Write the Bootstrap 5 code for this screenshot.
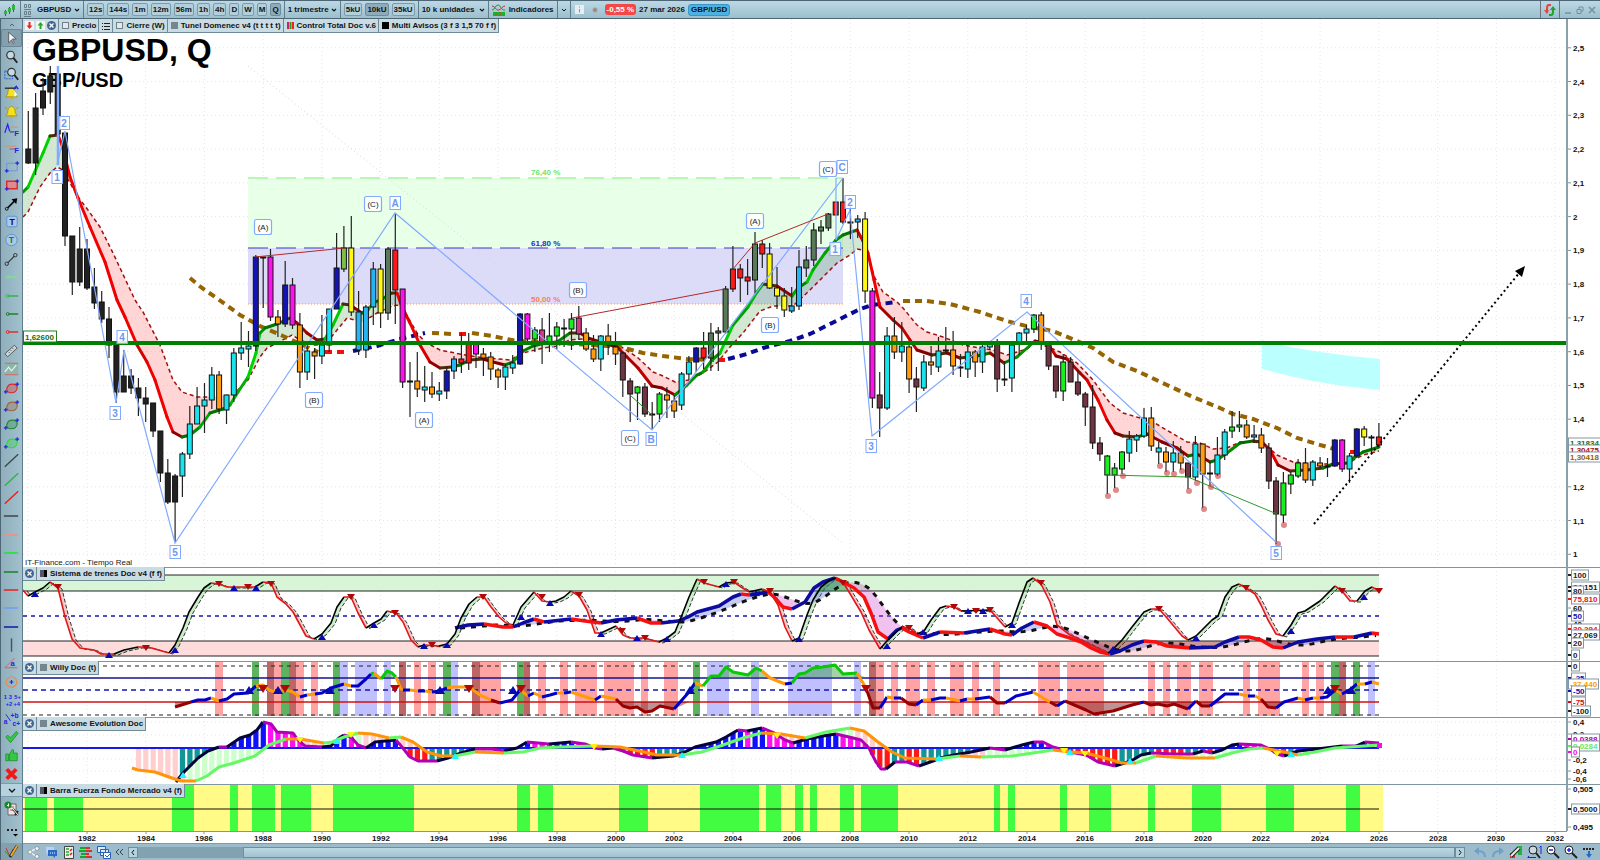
<!DOCTYPE html>
<html lang="es">
<head>
<meta charset="utf-8">
<meta name="viewport" content="width=device-width, initial-scale=1">
<title>GBPUSD, Q</title>
<link href="https://cdn.jsdelivr.net/npm/bootstrap@5.3.0/dist/css/bootstrap.min.css" rel="stylesheet">
<script src="https://cdn.jsdelivr.net/npm/bootstrap@5.3.0/dist/js/bootstrap.bundle.min.js"></script>
<style>
  body { font: bold 8px/10px "Liberation Sans", Arial, sans-serif; color: #101418; background: #fff; }
  button, select, input { font: inherit; color: inherit; }
  button { border: 0; background: none; padding: 0; line-height: 1; }
  svg { display: block; }
  .topbar { height: 19px; background: linear-gradient(#bcd8e5, #9cbfcc); border-top: 1px solid #4d6675; border-bottom: 1px solid #4d6675; }
  .topbar .cell { border-right: 1px solid #5f7c8b; height: 17px; display: flex; align-items: center; gap: 3px; padding: 0 3px; }
  .pick { appearance: none; border: 0; padding: 0; height: 14px; background: url("data:image/svg+xml,%3Csvg xmlns='http://www.w3.org/2000/svg' width='6' height='6'%3E%3Cpath d='M1 2l2 2 2-2' fill='none' stroke='%23101418' stroke-width='1.2'/%3E%3C/svg%3E") no-repeat right center; }
  .pick-pair { width: 43px; } .pick-unit { width: 49px; } .pick-size { width: 63px; }
  .tf { height: 13px; padding: 0 1px; border: 1px solid #7c9baa; border-radius: 2px; background: #b2cfdb; }
  .tf.on { background: #8fabb9; border-color: #6f8c9b; }
  .quote { gap: 3px; }
  .tagbox { border-radius: 3px; padding: 1px 2px; line-height: 9px; }
  .drop { background: #f24848; color: #fff; }
  .pairpill { background: #4db1e2; border: 1px solid #3795c8; line-height: 8px; }
  .side { width: 23px; background: linear-gradient(90deg, #8fafbd, #a2c0cd); border-left: 1px solid #4d6675; border-right: 1px solid #5f7c8b; }
  .side button { width: 100%; display: flex; align-items: center; justify-content: center; }
  .side .tools button { flex: 1 1 0; min-height: 0; }
  .side .on { background: #84a0ae; box-shadow: inset 0 0 0 1px #6d8997; border-radius: 2px; }
  .fold { height: 10px; } .unfold { height: 14px; background: #b6d2de; border-top: 1px solid #7c9baa; border-bottom: 1px solid #7c9baa; }
  .act { height: 23px; } .act2 { height: 23px; } .act3 { height: 17px; background: #84a0ae; }
  .pane { position: relative; flex-basis: 0; min-height: 0; }
  .pane > svg { width: 100%; height: 100%; position: absolute; }
  .p-price { flex-grow: 548; } .p-tren { flex-grow: 94; } .p-willy { flex-grow: 56; } .p-awe { flex-grow: 67; } .p-fuerza { flex-grow: 47; }
  .years { height: 12px; position: relative; } .years > svg { width: 100%; height: 100%; }
  .tabs { position: absolute; left: 0; top: 0; height: 14px; display: flex; background: #c9dbe3; border-bottom: 1px solid #6f8a98; }
  .tabs > * { border-right: 1px solid #6f8a98; display: flex; align-items: center; gap: 3px; padding: 0 2px 0 3px; white-space: nowrap; }
  .tabs .shut { padding: 0 2px; }
  .tabs .trio { gap: 2px; padding: 0 2px; }
  .sq { width: 7px; height: 7px; }
  .tabs input { appearance: none; width: 7px; height: 7px; border: 1px solid #71818a; background: #dfe9ee; margin: 0; }
  .foot { height: 17px; background: #9dbccb; border-top: 1px solid #7c9baa; }
  .foot .tray { gap: 4px; padding: 0 4px; }
  .track { background: #83a2b1; height: 11px; }
  .knob { background: linear-gradient(#bcd8e3, #a2c2cf); width: 92%; height: 11px; border: 1px solid #6f8f9f; }
  .arrowbtn { width: 10px; height: 11px; border: 1px solid #6f8f9f; background: #b6d2de; }
  text { font-family: "Liberation Sans", Arial, sans-serif; }
</style>
</head>
<body class="vh-100 d-flex flex-column overflow-hidden">
<header class="topbar d-flex align-items-center flex-shrink-0">
  <div class="cell">
    <svg width="14" height="14" viewBox="0 0 14 14"><path d="M2.500 7v6M6.500 4v7M10.500 1v8" stroke="#246b2c"/><path d="M1 8h3v3H1zM5 5h3v4H5zM9 2h3v5H9z" fill="#35b045"/></svg>
  </div>
  <div class="cell border-end-0">
    <svg width="7" height="14" viewBox="0 0 7 14" fill="none" stroke="#697f8b"><path d="M.5 1.500h2v3h-2zM4.500 1.500h2v3h-2zM.5 8.500h2v3h-2zM4.500 8.500h2v3h-2zM0 6.500h7M0 13.500h7"/></svg>
  </div>
  <div class="cell"><select class="pick pick-pair" aria-label="Valor"><option>GBPUSD</option></select></div>
  <div class="cell">
    <button class="tf">12s</button><button class="tf">144s</button><button class="tf">1m</button><button class="tf">12m</button><button class="tf">56m</button><button class="tf">1h</button><button class="tf">4h</button><button class="tf">D</button><button class="tf">W</button><button class="tf">M</button><button class="tf on">Q</button>
  </div>
  <div class="cell"><select class="pick pick-unit" aria-label="Periodo"><option>1 trimestre</option></select></div>
  <div class="cell"><button class="tf">5kU</button><button class="tf on">10kU</button><button class="tf">35kU</button></div>
  <div class="cell"><select class="pick pick-size" aria-label="Unidades"><option>10 k unidades</option></select></div>
  <div class="cell">
    <svg width="14" height="14" viewBox="0 0 14 14"><path d="M1 9v4h12v-4z" fill="#18b428"/><path d="M4 10v3M8 9v4" stroke="#e33"/><path d="M0 7c3 0 3-5 6-5s3 6 7 5" fill="none" stroke="#2a8f34"/><path d="M0 3c3 0 4 5 7 4s3-4 6-4" fill="none" stroke="#c33"/></svg>
    <button>Indicadores</button>
  </div>
  <div class="cell"><button aria-label="Más indicadores"><svg width="6" height="6"><path d="M1 2l2 2 2-2" fill="none" stroke="#101418"/></svg></button></div>
  <div class="quote d-flex align-items-center ps-1">
    <svg width="9" height="9" viewBox="0 0 9 9"><path d="M0 0h9v9H0z" fill="#e6eef2"/><path d="M4.500 1.500v1M4.500 4v3.500" stroke="#8796a0"/></svg>
    <svg width="15" height="8" viewBox="0 0 15 8"><circle cx="8" cy="4" r="2.500" fill="#8d8d8d" stroke="#b9b9b9"/></svg>
    <span class="tagbox drop">-0,55 %</span><span>27 mar 2026</span><span class="tagbox pairpill">GBP/USD</span>
  </div>
  <div class="ms-auto cell border-start border-secondary">
    <svg width="12" height="12" viewBox="0 0 12 12" fill="none" stroke-width="2"><path d="M7 1H5Q3 1 3 4v5" stroke="#e34545"/><path d="M0 6l3 4 2-4z" fill="#e34545"/><path d="M5 11h2q2 0 2-3V4" stroke="#1fa52b"/><path d="M12 6L9 2 6 6z" fill="#1fa52b"/></svg>
  </div>
  <div class="d-flex align-items-center gap-1 px-1">
    <button aria-label="Minimizar"><svg width="8" height="8"><path d="M1 7h6" stroke="#7590a0" stroke-width="1.500"/></svg></button>
    <button aria-label="Restaurar"><svg width="8" height="8" fill="none" stroke="#7590a0"><path d="M1 3.500h4v4H1zM3 3V1h4v4H5"/></svg></button>
    <button aria-label="Cerrar"><svg width="8" height="8"><path d="M1 1l6 6M7 1L1 7" stroke="#7590a0" stroke-width="1.500"/></svg></button>
  </div>
</header>

<div class="d-flex flex-grow-1" style="min-height:0">
  <nav class="side d-flex flex-column flex-shrink-0" aria-label="Herramientas">
    <button class="fold" aria-label="Plegar"><svg width="6" height="5"><path d="M1 4l2-2 2 2" fill="none" stroke="#4d6675"/></svg></button>
    <div class="tools d-flex flex-column flex-grow-1" id="tools"></div>
    <button class="unfold" aria-label="Más herramientas"><svg width="8" height="6"><path d="M1 2l3 3 3-3" fill="none" stroke="#101418" stroke-width="1.300"/></svg></button>
    <button class="act" aria-label="Objetos"><svg width="16" height="16" viewBox="0 0 16 16"><path d="M4 3h8v11H4z" fill="#e8e8e8" stroke="#666"/><path d="M6 6h4M6 9h4" stroke="#c44"/><circle cx="4" cy="4" r="3.500" fill="#168a26"/><path d="M3 4.500h2M4.500 2.500v3" stroke="#fff"/><path d="M9 8l5 6M14 10l-3 4" stroke="#222" stroke-width="2"/><path d="M9 8l5 6" stroke="#fff"/></svg></button>
    <button class="act2" aria-label="Opciones"><svg width="14" height="10"><path d="M2 3h2M6 3h2M10 3h2" stroke="#222" stroke-width="2"/><path d="M8 7h5l-2.500 2.500z"/></svg></button>
    <button class="act3" aria-label="Dibujo"><svg width="16" height="14" viewBox="0 0 16 14" fill="none"><path d="M2 3l4 9 3-8" stroke="#c33"/><path d="M1 6l5 6 3-6" stroke="#2a2"/><path d="M13 1L6 12" stroke="#222" stroke-width="3"/><path d="M13 1L7 11" stroke="#f4a720" stroke-width="2"/></svg></button>
  </nav>

  <main class="d-flex flex-column flex-grow-1" style="min-width:0">
    <section class="pane p-price">
      <svg id="price" role="img" aria-label="Gráfico GBPUSD trimestral"></svg>
      <div class="tabs">
        <span class="trio">
          <svg width="9" height="9"><path d="M0 0h9v9H0z" fill="#f4f4f4"/><path d="M4.500 1v4" stroke="#e22" stroke-width="2"/><path d="M1.500 4.500h6l-3 3.500z" fill="#e22"/></svg>
          <svg width="9" height="9"><path d="M0 0h9v9H0z" fill="#f4f4f4"/><path d="M4.500 8V4" stroke="#2a2" stroke-width="2"/><path d="M1.500 4.500h6l-3-3.500z" fill="#2a2"/></svg>
          <svg width="9" height="9"><circle cx="4.500" cy="4.500" r="4.500" fill="#3f6593"/><path d="M2.500 2.500l4 4M6.500 2.500l-4 4" stroke="#fff" stroke-width="1.300"/></svg>
        </span>
        <label><input type="checkbox">Precio</label>
        <button aria-label="Lista"><svg width="8" height="8"><path d="M0 1.500h1M0 4.500h1M0 7.500h1M2 1.500h6M2 4.500h6M2 7.500h6" stroke="#222"/></svg></button>
        <label><input type="checkbox">Cierre (W)</label>
        <span><svg class="sq"><path d="M0 0h7v7H0z" fill="#748791"/></svg>Tunel Domenec v4 (t t t t t)</span>
        <span><svg class="sq"><path d="M1 0v7" stroke="#d0206a" stroke-width="2"/><path d="M3.500 0v7" stroke="#22a022" stroke-width="2"/><path d="M6 0v7" stroke="#e22" stroke-width="2"/></svg>Control Total Doc v.6</span>
        <span><svg class="sq"><path d="M0 0h7v7H0z"/></svg>Multi Avisos (3 f 3 1,5 70 f f)</span>
      </div>
    </section>
    <section class="pane p-tren"><svg id="tren" role="img" aria-label="Sistema de trenes"></svg>
      <div class="tabs"><button class="shut" aria-label="Cerrar panel"></button><span><svg class="sq"><path d="M0 0h4v7H0z" fill="#556"/><path d="M4 0h3v7H4z"/></svg>Sistema de trenes Doc v4 (f f)</span></div></section>
    <section class="pane p-willy"><svg id="willy" role="img" aria-label="Willy Doc"></svg>
      <div class="tabs"><button class="shut" aria-label="Cerrar panel"></button><span><svg class="sq"><path d="M0 0h7v7H0z" fill="#748791"/></svg>Willy Doc (t)</span></div></section>
    <section class="pane p-awe"><svg id="awe" role="img" aria-label="Awesome Evolution"></svg>
      <div class="tabs"><button class="shut" aria-label="Cerrar panel"></button><span><svg class="sq"><path d="M0 0h7v7H0z" fill="#748791"/></svg>Awesome Evolution Doc</span></div></section>
    <section class="pane p-fuerza"><svg id="fuerza" role="img" aria-label="Barra Fuerza"></svg>
      <div class="tabs"><button class="shut" aria-label="Cerrar panel"></button><span><svg class="sq"><path d="M0 0h4v7H0z" fill="#556"/><path d="M4 0h3v7H4z"/></svg>Barra Fuerza Fondo Mercado v4 (f)</span></div></section>
    <div class="years flex-shrink-0"><svg id="years"></svg></div>
    <footer class="foot d-flex align-items-center flex-shrink-0">
      <div class="tray d-flex align-items-center">
        <button aria-label="Compartir"><svg width="14" height="13" viewBox="0 0 14 13"><path d="M3 6l7-4M3 6l7 5" stroke="#eef" stroke-width="1.500"/><circle cx="3" cy="6" r="2" fill="#f4f4f4" stroke="#777" stroke-width=".6"/><circle cx="10" cy="2.500" r="2" fill="#f4f4f4" stroke="#777" stroke-width=".6"/><circle cx="10" cy="10.500" r="2" fill="#f4f4f4" stroke="#777" stroke-width=".6"/></svg></button>
        <button aria-label="Chat"><svg width="13" height="13"><path d="M1 1h8v6H4l-2 2V7H1z" fill="#b7d1f4"/><path d="M3 4h9v6h-2v2l-2-2H3z" fill="#2868c8"/><path d="M5 7h1M7 7h1M9 7h1" stroke="#fff"/></svg></button>
        <button aria-label="Informe"><svg width="13" height="13"><path d="M2.500.5h9v12h-9z" fill="#eee" stroke="#444"/><path d="M4 3h3M4 6h3M4 9h3" stroke="#2a2" stroke-width="1.500"/><path d="M8 5l2-2M8 9l2-2" stroke="#c22" stroke-width="1.500"/></svg></button>
        <button aria-label="Órdenes"><svg width="14" height="13"><path d="M1 2h6M0 5h7M2 8h5M1 11h6" stroke="#18a828" stroke-width="2"/><path d="M7 2h4M7 5h6M7 8h3M7 11h6" stroke="#d83030" stroke-width="2"/></svg></button>
        <button aria-label="Ventanas"><svg width="14" height="13" stroke="#2563b8"><path d="M.5.5h8v6h-8zM3.500 3.500h8v6h-8z" fill="#dce9f8"/><path d="M6.500 6.500h7v6h-7z" fill="#fff"/><path d="M8 9l2 2 3-3" fill="none"/></svg></button>
        <button aria-label="Ocultar"><svg width="9" height="8" fill="none" stroke="#33454f"><path d="M4 1L1 4l3 3M8 1L5 4l3 3"/></svg></button>
      </div>
      <button class="arrowbtn" aria-label="Anterior"><svg width="8" height="8"><path d="M5 2L3 4.500 5 7" fill="none" stroke="#111"/></svg></button>
      <div class="track flex-grow-1 d-flex justify-content-end"><div class="knob"></div></div>
      <button class="arrowbtn" aria-label="Siguiente"><svg width="8" height="8"><path d="M3 2l2 2.500L3 7" fill="none" stroke="#111"/></svg></button>
      <div class="tray d-flex align-items-center ms-1">
        <button aria-label="Deshacer"><svg width="14" height="13"><path d="M12 11c0-5-3-6-7-6" fill="none" stroke="#6f9fc9" stroke-width="2"/><path d="M1 5l5-4v8z" fill="#6f9fc9"/></svg></button>
        <button aria-label="Rehacer"><svg width="14" height="13"><path d="M2 11c0-5 3-6 7-6" fill="none" stroke="#6f9fc9" stroke-width="2"/><path d="M13 5L8 1v8z" fill="#6f9fc9"/></svg></button>
        <button aria-label="Ajustes"><svg width="14" height="14"><path d="M9 1h4v9H9z" fill="#27b33a"/><path d="M1 8h5v5H1z" fill="#d33"/><path d="M2 11l8-8" stroke="#222" stroke-width="4"/><path d="M2 11l8-8" stroke="#eee" stroke-width="2"/></svg></button>
        <button aria-label="Ajustar zoom"><svg width="15" height="14" fill="none"><circle cx="6" cy="5" r="4" fill="#cdd8de" stroke="#222"/><path d="M9 8l4 5" stroke="#222" stroke-width="2"/><path d="M14 1v8M12.500 2.500L14 1M1 12.500h8M2 11l-1.500 1.500" stroke="#22d"/></svg></button>
        <button aria-label="Alejar"><svg width="14" height="14" fill="none"><circle cx="5" cy="5" r="4" fill="#fff" stroke="#222"/><path d="M8 8l5 5" stroke="#222" stroke-width="2"/><path d="M3 5h4" stroke="#22d" stroke-width="1.500"/></svg></button>
        <button aria-label="Acercar"><svg width="14" height="14" fill="none"><circle cx="5" cy="5" r="4" fill="#fff" stroke="#222"/><path d="M8 8l5 5" stroke="#222" stroke-width="2"/><path d="M3 5h4M5 3v4" stroke="#22d" stroke-width="1.500"/></svg></button>
        <button aria-label="Ir al final"><svg width="14" height="13"><path d="M1 3h2M4 3h2M7 3h2M10 3h2" stroke="#222" stroke-width="2"/><path d="M7 5v3" stroke="#2468c8" stroke-width="2"/><path d="M4 8h6l-3 4z" fill="#2468c8"/></svg></button>
      </div>
    </footer>
  </main>
</div>

<script>
/* ---------- side toolbar ---------- */
const L = (c, d, w = 1.5) => `<path d="${d}" stroke="${c}" stroke-width="${w}" fill="none"/>`;
const plus = (x, y) => L('#2424e0', `M${x - 2} ${y}h4M${x} ${y - 2}v4`, 1.2);
const T = (x, y, s, c, z = 8) => `<text x="${x}" y="${y}" font-size="${z}" font-weight="bold" fill="${c}">${s}</text>`;
const hline = c => L(c, 'M3 9h15');
const slash = c => L(c, 'M4 15L18 2');
const nodeLine = c => L(c, 'M8 9h10') + `<circle cx="7" cy="9" r="1.500" fill="none" stroke="${c}"/>`;
const oval = c => `<path d="M6 10q1-5 6-5t5 4q-1 5-6 5t-5-4z" fill="${c}" fill-opacity=".3" stroke="${c}" stroke-width="1.200"/>` + plus(5, 13) + plus(17, 5);
const bell = '<path d="M11 3q-4 1-4 7l-2 3h12l-2-3q0-6-4-7z" fill="#f3e21c" stroke="#a08a10" stroke-width=".8"/><circle cx="11" cy="14" r="1.500" fill="#d9a90d"/>';
const glass = (x, y) => `<circle cx="${x}" cy="${y}" r="4" fill="#c6dae3" stroke="#333" stroke-width="1.200"/>` + L('#222', `M${x + 3} ${y + 3}l4 5`, 2);
const tools = [
  ['Cursor', '<path d="M8 3v11l3-3 2 4 1-1-2-4h4z" fill="#eef4f7" stroke="#444" stroke-width=".8"/>'],
  ['Lupa', glass(10, 7)],
  ['Zoom', '<path d="M4 5h8v8H4z" fill="none" stroke="#2563d8" stroke-dasharray="2 1"/>' + glass(11, 6)],
  ['Alerta', bell + L('#333', 'M4 4l12 0') + L('#2424e0', 'M13 5l3-3 2 3') + '<path d="M14 6v7l3-2z" fill="#fff"/>'],
  ['Avisos', bell + L('#a08a10', 'M4 4l2 2M18 4l-2 2', 1)],
  ['Fibonacci A', L('#2424e0', 'M4 12l3-9 2 7', 1.3) + L('#e58b68', 'M9 6h9', 1) + L('#333', 'M9 11h5', 1) + T(14, 15, 'F', '#2424e0')],
  ['Fibonacci', L('#e58b68', 'M5 6h11', 1) + L('#a05050', 'M9 9h6', 1) + T(14, 13, 'F', '#2424e0')],
  ['Rectángulo azul', '<path d="M6 5h11v8H6z" fill="none" stroke="#6a96d8"/>' + plus(6, 13) + plus(17, 5)],
  ['Rectángulo rojo', '<path d="M6 5h11v8H6z" fill="#d98c92" stroke="#e02828" stroke-width="1.500"/>' + plus(6, 13) + plus(17, 5)],
  ['Flecha', L('#111', 'M7 13l7-7', 1.8) + '<path d="M11 4l6-1-1 6z"/><circle cx="6" cy="14" r="1.500" fill="none" stroke="#111"/>'],
  ['Texto', '<rect x="6" y="3" width="11" height="11" rx="2" fill="#a9c8ea" stroke="#5d8fd6"/>' + T(9, 12, 'T', '#111', 9)],
  ['Globo', '<circle cx="11" cy="9" r="6" fill="#a9c8ea" stroke="#5d8fd6"/>' + T(8, 12, 'T', '#128024', 9)],
  ['Segmento', L('#333', 'M7 13l7-7', 1.2) + '<circle cx="6" cy="14" r="1.800" fill="none" stroke="#333"/><circle cx="15" cy="5" r="1.800" fill="none" stroke="#333"/>'],
  ['Semirrecta clara', nodeLine('#7ae28c')], ['Semirrecta', nodeLine('#35b045')], ['Semirrecta oscura', nodeLine('#128024')], ['Semirrecta roja', nodeLine('#e02828')],
  ['Regla', '<path d="M4 12L14 3l3 3L7 15z" fill="#c9d6dd" stroke="#555"/>' + L('#555', 'M8 10l1 1M10 8l1 1M12 6l1 1', 1)],
  ['Canal', '<path d="M4 3h14v12H4z" fill="#8bb6a8"/>' + L('#e06060', 'M4 3h14M4 15h14', 1) + L('#e8f4f8', 'M4 12l4-5 3 4 5-6', 1.2)],
  ['Elipse roja', oval('#e02828')], ['Elipse marrón', oval('#a0643c')], ['Elipse verde', oval('#1f8a35')], ['Elipse clara', oval('#28dc3c')],
  ['Línea', slash('#3a4a52')], ['Línea verde', slash('#35b045')], ['Línea roja', slash('#ee1c1c')],
  ['Horizontal', hline('#3a3f42')], ['Horizontal salmón', hline('#ff8878')], ['Horizontal lima', hline('#10ee20')], ['Horizontal verde', hline('#108020')],
  ['Horizontal roja', hline('#f01818')], ['Horizontal celeste', hline('#6c9cf4')], ['Horizontal azul', hline('#0c10a8')],
  ['Vertical', L('#46545c', 'M11 2v14')],
  ['Ángulo', L('#d86060', 'M4 14L14 4M4 14h13', 1) + T(10, 12, 'a', '#2424e0')],
  ['Ciclo', '<circle cx="11" cy="9" r="5.500" fill="none" stroke="#e58b58" stroke-width="1.300"/>' + plus(11, 9)],
  ['Ondas', T(3, 8, '1', '#2424e0', 6) + T(8, 8, '3', '#2424e0', 6) + T(14, 8, '5+', '#2424e0', 6) + T(5, 15, '+2', '#2424e0', 6) + T(13, 15, '+4', '#2424e0', 6)],
  ['Ondas abc', T(3, 14, 'a', '#2424e0', 7) + T(10, 8, '+b', '#2424e0', 7) + T(12, 16, 'c+', '#2424e0', 7) + L('#2424e0', 'M5 4l5 7', 1)],
  ['Aceptar', '<path d="M5 9l2-2 3 3 6-7 2 2-8 10z" fill="#34c944" stroke="#1b8a2c" stroke-width=".8"/>'],
  ['Me gusta', '<path d="M5 8h3v7H5zM9 8l3-5q2 0 1 4h4v8H9z" fill="#34c944" stroke="#1b8a2c" stroke-width=".8"/>'],
  ['Borrar', L('#f01818', 'M6 4l10 10M16 4L6 14', 4)]
];
document.getElementById('tools').innerHTML = tools.map(([n, s], i) =>
  `<button aria-label="${n}"${i ? '' : ' class="on"'}><svg width="22" height="18" viewBox="0 0 22 18">${s}</svg></button>`).join('');
document.querySelectorAll('.shut').forEach(b => b.innerHTML =
  '<svg width="9" height="9"><circle cx="4.500" cy="4.500" r="4.500" fill="#3f6593"/><path d="M2.500 2.500l4 4M6.500 2.500l-4 4" stroke="#fff" stroke-width="1.300"/></svg>');

/* ---------- series, in chart units (x: 23..1567, y grows downwards) ---------- */
/* one candle per quarter from 1980: high, body top, body bottom, low, colour key */
const candles = `111,149,163,164,k 93,108,163,175,k 78,91,108,115,k 66,76,92,104,k 66,74,134,134,k 133,133,236,246,k 236,236,282,295,k 227,249,282,286,k
239,249,288,290,k 268,287,303,309,k 291,302,319,323,k 307,319,345,358,k 345,345,392,403,k 350,376,392,392,k 369,376,388,394,k 378,388,398,416,k
387,398,404,422,k 403,403,431,437,k 431,431,473,482,k 459,473,502,504,k 474,476,502,542,k 452,454,476,497,c 406,424,454,459,c 387,406,424,424,c
383,400,406,433,c 367,375,400,409,c 371,375,409,414,o 395,395,410,424,c 348,353,395,402,c 322,348,353,360,c 331,346,349,367,c 255,257,346,351,n
257,257,258,308,k 249,257,317,321,m 310,317,324,337,o 261,285,324,327,n 278,285,325,329,m 313,325,372,388,o 345,351,372,380,c 348,352,356,379,o
315,345,356,364,c 309,309,345,352,c 233,268,309,309,n 226,248,269,272,l 216,248,312,316,y 291,312,350,355,b 305,307,350,358,b 262,269,307,325,b
264,269,313,328,y 247,249,313,320,d 213,250,290,324,r 289,289,382,388,m 362,381,382,417,k 352,381,389,397,o 366,387,390,402,c 372,387,394,398,o
382,391,394,401,c 367,371,391,399,n 356,359,371,379,b 333,359,363,373,r 333,344,363,370,r 344,344,354,368,m 348,354,358,376,o 352,357,369,380,o
368,370,377,388,o 364,367,377,390,c 355,363,368,374,c 313,314,364,365,n 313,314,339,344,m 327,330,339,352,g 318,330,343,364,p 313,336,342,352,g
322,327,336,349,g 319,328,329,347,p 313,319,329,350,g 306,318,334,340,p 328,333,349,351,o 335,349,359,362,o 335,336,359,371,c 324,336,344,355,o
332,347,354,365,o 352,353,380,397,w 378,381,394,422,w 386,387,393,420,g 383,387,414,417,w 402,414,415,429,g 392,394,414,422,g 387,395,400,418,o
395,401,411,418,o 372,374,405,410,c 356,362,374,380,c 347,348,362,372,n 332,348,358,369,r 323,333,358,371,d 327,331,333,371,d 286,289,332,334,d
246,269,289,292,r 264,269,278,302,r 259,277,281,295,r 232,244,280,293,d 240,244,254,268,r 243,254,288,289,y 267,288,296,309,y 288,296,310,317,y
287,306,311,313,b 250,267,306,310,b 246,260,268,277,d 223,230,260,266,d 220,227,231,244,d 213,214,228,231,d 202,202,215,215,r 178,202,222,224,r
205,222,223,239,k 215,219,222,238,b 212,219,291,303,y 288,291,398,408,m 372,395,408,437,w 327,336,408,410,c 317,336,352,359,o 322,346,352,362,c
345,347,379,393,o 367,379,387,412,w 355,362,388,391,c 346,362,365,375,o 337,351,367,372,c 327,350,351,354,k 331,350,366,375,o 354,367,368,377,k
345,352,369,378,c 350,352,362,377,o 344,347,362,373,c 342,344,347,350,c 339,344,379,392,w 361,379,380,386,k 344,345,378,392,c 332,333,344,355,c
325,329,333,343,c 314,315,329,333,g 312,315,342,350,o 344,344,366,370,w 366,366,391,398,w 354,362,391,401,g 357,362,382,382,w 370,382,394,396,w
392,394,407,426,w 385,407,443,449,w 437,443,454,461,w 455,456,475,494,g 463,468,475,488,g 451,452,469,474,g 431,439,453,462,c 434,436,440,452,c
408,418,436,438,c 407,418,446,451,o 442,448,452,464,c 447,452,462,472,o 441,453,462,472,c 446,453,463,470,o 463,463,477,489,w 436,444,477,481,c
444,444,474,508,o 461,473,474,486,k 437,455,474,476,c 429,432,455,460,c 411,427,431,438,g 411,425,427,432,g 420,425,437,439,o 425,435,437,443,b
428,435,448,453,o 443,448,481,489,w 477,481,514,544,w 472,483,515,523,g 472,475,484,494,g 459,463,476,478,g 448,463,480,483,o 460,462,480,486,c
457,463,466,468,o 458,466,467,477,k 439,440,466,467,n 439,440,469,472,m 453,456,469,483,c 428,429,456,458,n 426,429,437,446,y 435,437,438,453,k
423,437,445,446,r`.split(/\s+/).map(s => s.split(','));
const bodyColor = { k: '#222', c: '#19e4ee', o: '#ff9c12', n: '#1414b4', m: '#ff10ee', l: '#7cbf48', y: '#fff814', b: '#25b6f2', d: '#587a58', r: '#ff1818', g: '#18ee20', p: '#cf3c84', w: '#703442' };
const P = s => s.trim().split(/\s+/).map(p => p.split(',').map(Number));
const maFast = P(`23,192 28,187 43,153 50,136 58,135 62,145 70,177 78,198 90,227 105,262 117,300 125,317 137,345 147,362 155,380 167,417 173,432 182,437 190,435 200,427 210,413 223,409 230,405 238,392 248,377 256,353 260,333 265,328 277,324 290,318 297,323 307,333 317,340 325,339 333,325 343,304 350,305 362,313 368,310 373,303 382,299 392,293 397,293 402,307 410,323 420,345 430,362 440,368 452,367 460,365 470,360 483,359 493,362 505,365 513,362 523,351 533,346 545,343 557,342 570,333 580,333 588,338 600,342 617,347 627,357 638,368 652,386 662,388 675,395 687,385 697,375 703,372 712,360 720,353 725,342 733,325 748,307 757,292 763,284 777,286 792,296 798,288 807,282 813,270 825,253 836,240 843,235 857,230 863,241 868,253 874,280 880,307 893,320 902,328 910,340 917,350 932,355 947,353 960,358 977,356 990,353 1004,363 1017,357 1035,341 1048,344 1056,356 1067,359 1080,373 1087,380 1098,400 1107,420 1115,433 1123,436 1137,437 1147,434 1162,442 1177,448 1188,456 1197,454 1210,462 1217,460 1227,453 1240,443 1253,441 1262,442 1270,450 1278,465 1290,471 1307,470 1323,468 1333,464 1348,463 1355,457 1363,452 1379,447`);
const maSlow = P(`23,217 28,212 40,187 50,173 57,167 63,170 70,183 78,197 88,210 100,227 113,253 135,300 143,312 160,345 173,380 182,392 197,397 213,397 230,395 238,390 248,380 260,357 267,348 277,343 292,335 300,340 313,345 325,345 337,330 347,318 363,322 377,313 390,307 397,305 405,312 417,333 425,342 440,350 460,354 477,357 510,360 523,353 543,348 557,346 570,340 583,339 610,343 623,348 637,357 653,372 663,376 675,382 690,380 703,373 718,362 730,347 743,333 760,311 773,306 793,306 810,290 827,273 837,263 850,255 857,249 863,250 868,258 875,278 883,292 897,302 903,308 917,325 927,332 943,337 963,345 980,348 993,350 1007,355 1027,349 1035,342 1048,347 1060,352 1077,363 1093,380 1110,403 1123,413 1140,418 1153,422 1170,432 1187,442 1200,443 1213,449 1227,448 1240,442 1253,442 1263,443 1277,455 1293,462 1313,464 1333,464 1348,463 1363,455 1379,451`);
const longMa = [
  ['#966400', '190,278 202,288 218,299 240,315 260,326 283,336 307,347 318,352'], ['#f01010', '325,352 347,352'],
  ['#0a0a96', '353,351 377,346 400,339 425,333'], ['#966400', '432,333 453,334'], ['#f01010', '459,334 470,334'], ['#966400', '472,333 492,336 517,341 560,343 620,347 632,350 643,353 663,356 687,359 714,360'],
  ['#f01010', '718,360 725,360'], ['#0a0a96', '728,359 747,354 763,348 790,341 810,334 830,324 850,314 860,309 872,305 897,302'],
  ['#966400', '903,301 927,301 950,304 980,312 1007,321 1030,327 1053,331 1077,341 1093,348 1113,362 1137,371 1167,385 1193,397 1220,408 1233,414 1253,419 1277,428 1297,438 1317,444 1334,449'], ['#f01010', '1350,452 1357,452']];
const trainFast = P(`23,590 28,596 35,592 43,588 50,582 58,588 65,617 72,639 80,648 94,650 101,654 114,654 124,650 138,647 148,647 169,653 175,645 183,628 189,612 198,597 204,588 211,583 219,584 227,587 241,587 255,587 263,582 271,583 277,597 286,604 293,612 306,636 314,639 322,634 331,623 337,607 344,597 351,597 358,613 366,628 374,623 381,619 387,611 396,613 403,622 411,640 418,647 424,645 439,646 447,644 455,634 461,618 469,604 477,597 484,597 491,607 499,617 506,623 513,625 521,607 534,592 542,601 550,602 556,601 564,597 571,591 579,596 587,610 595,633 601,633 616,626 623,635 630,638 644,638 659,642 667,638 675,632 682,615 689,597 697,579 704,583 719,587 726,583 734,582 741,587 749,592 762,589 770,592 778,605 785,627 792,641 799,638 807,615 813,600 821,587 830,580 836,578 843,582 852,597 861,612 869,630 880,649 886,642 895,633 902,627 909,628 917,634 924,631 931,620 940,608 946,606 954,607 961,611 990,610 998,619 1005,627 1012,623 1019,603 1027,582 1033,578 1041,584 1050,602 1057,625 1070,635 1077,638 1091,645 1108,653 1113,649 1122,640 1132,627 1144,612 1151,609 1159,609 1167,618 1182,636 1188,640 1196,636 1203,629 1212,620 1218,616 1225,597 1232,587 1239,584 1246,588 1255,594 1261,605 1268,620 1276,634 1283,636 1291,625 1298,613 1305,611 1320,601 1335,586 1342,591 1350,601 1357,601 1365,591 1372,587 1379,591`);
const trainSlow = P(`455,628 468,625 484,624 503,627 513,627 523,623 534,619 544,622 571,619 585,621 601,623 616,620 637,618 651,623 661,623 678,621 688,617 697,612 719,606 733,597 741,594 750,595 768,592 774,597 783,607 792,609 805,602 814,588 823,582 835,578 843,582 854,588 864,597 871,613 878,632 888,639 897,630 902,628 909,632 923,638 940,632 964,633 990,629 1005,634 1012,635 1022,628 1034,622 1047,626 1057,634 1070,638 1081,642 1091,648 1100,652 1110,654 1120,651 1132,645 1144,641 1156,642 1167,646 1189,648 1215,647 1225,642 1239,637 1249,637 1261,640 1273,647 1283,648 1298,642 1317,639 1335,637 1354,637 1372,633 1379,634`);
const trainUp = P('35,594 109,655 175,650 234,588 256,588 322,637 374,625 424,646 447,645 521,617 550,603 601,634 637,638 667,639 726,584 756,593 799,639 887,646 923,632 968,611 983,611 1012,625 1113,649 1196,638 1291,631 1364,597');
const trainDown = P('58,587 146,648 219,584 248,587 271,584 351,597 395,613 432,645 483,597 542,597 579,595 622,631 645,638 704,582 734,582 770,591 843,583 909,628 954,607 976,611 990,610 1041,583 1159,609 1246,588 1342,591 1379,591');
const willyBands = 'p215-223 g252-259 d267-274 p274-281 g281-289 d289-296 p296-304 p311-318 g333-340 l340-348 l355-377 l384-391 d399-406 p414-421 p428-436 g443-451 l451-458 d472-480 p480-501 g517-524 d524-530 p538-546 p560-568 p575-597 p604-634 p641-648 p664-678 g693-700 l707-729 l751-759 l788-832 l854-861 d869-876 p876-884 p891-898 p906-920 p927-935 p950-964 p972-979 p993-1000 p1038-1060 p1067-1104 p1148-1155 p1163-1170 p1177-1191 p1199-1213 p1243-1250 p1258-1280 p1302-1309 p1316-1324 g1331-1339 d1339-1346 g1353-1360 l1368-1375';
const bandColor = { p: '#ffa3a3', g: '#5eb45e', d: '#bc6666', l: '#c0c0ff' };
/* a letter before a run gives its colour; the run starts where the last one ended */
const willyRuns = `r 175,707 191,702 b 198,700 205,700 211,698 o 219,701 b 227,699 234,694 248,693 256,686 o 263,685 269,690 275,692 286,690 293,692 300,697 b 307,695 o 315,694 b 322,693 331,688 344,684 o 351,686 b 358,686 366,679 371,674 g 374,673 o 381,679 g 387,671 392,673 396,677 o 401,689 403,690 b 410,690 o 418,691 b 425,691 o 432,692 b 440,691 447,688 o 454,687 469,687 480,695 491,700 r 500,703 b 512,700 520,690 o 528,696 b 534,693 o 542,697 b 550,695 557,693 o 564,693 b 571,692 o 595,700 b 601,696 o 616,699 r 623,706 630,708 637,707 645,712 652,711 660,706 674,709 b 689,692 695,683 o 703,686 g 711,676 719,676 726,667 733,672 748,675 756,668 762,671 o 770,678 785,684 b 792,683 g 799,674 805,673 813,668 823,667 835,665 843,674 857,673 o 866,688 r 873,708 880,708 b 887,697 o 894,698 b 901,698 r 909,704 916,705 b 923,700 o 931,700 b 940,698 946,698 o 960,701 b 967,699 o 975,699 b 990,697 r 997,703 1005,703 b 1016,696 1033,692 o 1050,702 r 1057,706 b 1065,701 r 1086,710 1094,714 1113,711 1132,705 1140,703 b 1144,702 r 1151,705 1158,704 1167,706 1174,704 1188,709 b 1196,701 r 1202,706 1210,706 b 1225,694 1239,694 o 1248,696 b 1255,696 o 1261,699 r 1268,707 1276,708 b 1284,702 1298,698 o 1305,700 b 1313,698 o 1320,698 b 1327,697 1335,690 o 1342,694 b 1351,689 1357,684 o 1365,684 b 1372,682 o 1379,684`;
const aweFast = P(`176,782 183,773 189,767 198,758 208,751 219,747 227,747 240,738 250,735 257,730 263,722 271,724 277,732 293,733 298,740 305,746 322,747 331,746 339,738 344,735 351,737 358,745 366,748 375,742 396,740 402,747 410,757 418,761 437,761 448,758 461,753 475,749 492,749 504,751 517,748 527,742 549,744 571,742 585,744 595,748 602,749 613,748 623,751 633,755 652,758 673,756 685,752 695,747 716,742 726,737 738,730 747,731 762,728 774,733 785,740 793,743 807,739 823,736 836,734 849,737 861,740 869,748 876,762 881,769 886,769 895,762 907,762 919,766 933,761 940,758 954,755 971,752 990,748 1005,750 1022,745 1034,742 1043,742 1053,747 1064,750 1070,752 1086,755 1098,762 1115,766 1131,761 1141,755 1151,753 1174,754 1193,754 1203,751 1212,753 1222,750 1232,745 1239,744 1261,745 1270,749 1277,754 1284,756 1298,751 1317,749 1342,746 1356,746 1365,742 1379,743`);
const aweSlow = P(`132,768 138,770 155,772 169,777 181,781 196,781 207,776 219,767 234,763 255,756 269,745 286,739 300,739 324,743 332,742 344,737 358,733 372,734 389,738 401,737 413,742 427,752 441,756 455,756 475,752 504,753 523,752 540,748 561,747 594,746 620,747 644,752 657,755 682,755 702,752 723,745 743,738 761,733 781,734 805,738 826,732 850,728 864,731 878,742 892,752 905,758 936,759 960,756 981,757 1012,756 1033,753 1053,750 1070,752 1086,753 1105,758 1122,763 1136,763 1156,756 1187,758 1215,758 1232,753 1249,749 1263,748 1284,752 1298,755 1315,752 1335,748 1379,745`);
const fuerza = '25-47 54-83 172-194 230-238 252-275 281-311 333-414 517-530 538-553 619-648 700-759 766-781 795-803 810-817 840-854 861-898 994-1000 1008-1015 1060-1067 1089-1111 1148-1155 1192-1221 1266-1294 1346-1360';

/* ---------- drawing ---------- */
const AXIS = 33;
const at = (pts, x) => {
  if (x <= pts[0][0]) return pts[0][1];
  for (let i = 1; i < pts.length; i++) if (x <= pts[i][0]) {
    const [a, b] = pts[i - 1], [c, d] = pts[i];
    return b + (d - b) * (x - a) / (c - a);
  }
  return pts[pts.length - 1][1];
};
const quarterX = q => 28.3 + 7.34 * q;
function plot(id, y0, y1, draw) {
  const el = document.getElementById(id), W = el.clientWidth, H = el.clientHeight;
  const X = v => +(v > 1567 ? W - AXIS + v - 1567 : (v - 23) * (W - AXIS) / 1544).toFixed(1);
  const Y = v => +((v - y0) * H / (y1 - y0)).toFixed(1);
  let out = '';
  const g = {
    X, Y, W, H,
    add: s => out += s,
    line: (pts, c, w = 1, dash = '', extra = '') => out += `<polyline points="${pts.map(p => X(p[0]) + ',' + Y(p[1])).join(' ')}" fill="none" stroke="${c}" stroke-width="${w}"${dash && ` stroke-dasharray="${dash}"`} ${extra}/>`,
    area: (pts, c, o = 1) => out += `<polygon points="${pts.map(p => X(p[0]) + ',' + Y(p[1])).join(' ')}" fill="${c}" fill-opacity="${o}"/>`,
    rect: (x, y, x2, y2, c) => out += `<rect x="${X(x)}" y="${Y(y)}" width="${X(x2) - X(x)}" height="${Y(y2) - Y(y)}" fill="${c}"/>`,
    text: (x, y, s, size = 8, c = '#111', extra = 'font-weight="bold"') => out += `<text x="${X(x)}" y="${Y(y)}" font-size="${size}" fill="${c}" ${extra}>${s}</text>`,
    tri: (pts, up, c, r = 5) => pts.forEach(([x, y]) => { const a = X(x), b = Y(y), k = up ? -1 : 1; out += `<path d="M${a - r} ${b - k * (r - 1)}h${2 * r}l${-r} ${k * (2 * r - 2)}z" fill="${c}"/>`; }),
    trend: (pts, up, down, w) => { let i = 0; while (i < pts.length - 1) { const rise = pts[i + 1][1] < pts[i][1]; let j = i + 1; while (j < pts.length - 1 && (pts[j + 1][1] < pts[j][1]) === rise) j++; g.line(pts.slice(i, j + 1), rise ? up : down, w, '', 'stroke-linejoin="round"'); i = j; } },
    between: (a, b, from, to, above, below, o) => { let run = [], s0 = null; const flush = () => { if (run.length > 1) g.area([...run.map(x => [x, at(a, x)]), ...run.slice().reverse().map(x => [x, at(b, x)])], s0 ? above : below, o); }; for (let x = from; x <= to; x += 2) { const s = at(b, x) < at(a, x); if (s !== s0) { flush(); run = []; s0 = s; } run.push(x); } flush(); },
    tick: y => g.line([[1567, y], [1571, y]], '#7e929c'),
    mark: (y, s) => { g.tick(y); g.text(1573, y + 3, s); },
    tag: (y, s, c = '#222') => { const w = [...s].reduce((n, k) => n + (k === ',' || k === '-' ? 2.4 : 4.5), 3), x = s.length > 6 ? 1570 : 1573; g.line([[1567, y], [1572, y]], c, 2); out += `<rect x="${X(x) - 1.5}" y="${Y(y) - 5}" width="${Math.round(w)}" height="10" fill="#fff" stroke="#8398a2"/>`; g.text(x, y + 3, s, 8, c); }
  };
  for (let y = 1980; y <= 2032; y += 2) { const x = quarterX((y - 1980) * 4); g.line([[x, y0], [x, y1]], '#e6e6e6', 1, '1 3'); }
  draw(g);
  g.line([[23, y0], [1600, y0]], '#7f96a1', id === 'price' ? 0 : 2);
  g.line([[1567, y0], [1567, y1]], '#8ca0aa', 2);
  el.innerHTML = out;
}
function drawPrice(g) {
  const priceY = p => 554.3 - (p - 1) * 337.7;
  for (let i = 0; i <= 15; i++) g.line([[23, priceY(1 + i / 10)], [1567, priceY(1 + i / 10)]], '#e6e6e6', 1, '1 3');
  g.rect(248, 178, 843, 248, '#e8ffe8'); g.rect(248, 248, 843, 304, '#dddcf8');
  g.line([[248, 178], [843, 178]], '#7ef07e', 1.2, '20 8'); g.line([[248, 248], [843, 248]], '#3838d0', 1.2, '20 8'); g.line([[248, 304], [843, 304]], '#ff8c50', 1, '1 2');
  g.line([[248, 66], [843, 543]], '#d4d4d4', 1, '1 3');
  g.text(531, 175, '76,40 %', 8, '#6ce66c'); g.text(531, 246, '61,80 %', 8, '#2a2ad0'); g.text(531, 302, '50,00 %', 8, '#ff8050');
  g.area(P('1262,340 1290,347 1320,352 1350,356 1380,359 1380,390 1343,386 1313,381 1290,376 1262,369'), '#b4ffff', .9);
  g.text(32, 61, 'GBPUSD, Q', 32, '#000'); g.text(32, 87, 'GBP/USD', 20, '#000');
  g.between(maFast, maSlow, 23, 1379, '#ff4040', '#309830', .22);
  g.line(maSlow, '#a01010', 1.5, '4 3');
  longMa.forEach(([c, s]) => g.line(P(s), c, 4, '7 5'));
  for (let i = 1; i < maFast.length; i++) {
    const [a, b] = maFast[i - 1], [c, d] = maFast[i], s = (d - b) / (c - a), k = Math.min(1, Math.abs(s) / 2.2);
    const col = Math.abs(s) < .15 ? '#4c2c0a' : s > 0 ? `rgb(${110 + Math.round(130 * k)},0,0)` : `rgb(0,${100 + Math.round(110 * k)},0)`;
    g.line([[a, b], [c, d]], col, 3, '', 'stroke-linecap="round"');
  }
  candles.forEach((k, q) => {
    const x = g.X(quarterX(q)), [h, t, b, l] = k.slice(0, 4).map(v => g.Y(+v));
    g.add(`<path d="M${x} ${h}V${l}" stroke="#222" stroke-width="1.200"/><rect x="${x - 2.5}" y="${t}" width="5" height="${Math.max(.5, b - t)}" fill="${bodyColor[k[4]]}" stroke="#111"/>`);
  });
  const wave = '#82aaff';
  g.line(P('58,66 58,165'), wave, 2.5);
  g.line(P('57,165 65,131 116,403 124,350 175,543 395,213 652,430 843,178'), wave, 1.2);
  g.line(P('836,178 836,240 850,210 872,436 1027,312 1277,543'), wave, 1.2);
  g.line(P('255,257 345,248'), '#b42828'); g.line(P('572,318 725,289'), '#b42828'); g.line(P('733,269 755,243 828,214'), '#b42828');
  g.line(P('630,395 652,415'), '#2a8a2a'); g.line(P('1107,475 1188,477 1277,514'), '#2a9a2a');
  P('1108,496 1116,490 1123,476 1160,466 1167,473 1174,474 1182,471 1189,491 1197,483 1204,509 1211,487 1218,476 1284,525 1278,544').forEach(([x, y]) => g.add(`<circle cx="${g.X(x)}" cy="${g.Y(y)}" r="3" fill="#c83c3c" fill-opacity=".6"/>`));
  g.line([[1314, 524], [1520, 272]], '#000', 2, '2 3');
  const ax = g.X(1525), ay = g.Y(266);
  g.add(`<path d="M${ax} ${ay}l-3 11-7-6z" fill="#000"/>`);
  g.line([[23, 343], [1567, 343]], '#008000', 4);
  g.add(`<rect x=".5" y="${g.Y(331)}" width="33" height="11" fill="#fff" stroke="#208020"/>`); g.text(25, 340, '1,62600', 8, '#107010');
  [['1', 57, 177], ['2', 64, 123], ['3', 115, 413], ['4', 122, 337], ['5', 175, 552], ['A', 395, 203], ['B', 651, 439], ['C', 842, 167], ['1', 835, 249], ['2', 850, 202], ['3', 871, 446], ['4', 1026, 301], ['5', 1276, 553]].forEach(([s, x, y]) => {
    g.add(`<rect x="${g.X(x) - 5}" y="${g.Y(y) - 6.5}" width="10.500" height="13" fill="#fff" fill-opacity=".85" stroke="${wave}"/><text x="${g.X(x)}" y="${g.Y(y) + 3.5}" text-anchor="middle" font-size="10" font-weight="bold" fill="#6c98f0">${s}</text>`); });
  [['A', 263, 227], ['B', 314, 400], ['C', 373, 204], ['A', 424, 420], ['C', 630, 438], ['B', 578, 290], ['A', 755, 221], ['B', 770, 325], ['C', 828, 169]].forEach(([s, x, y]) => {
    g.add(`<rect x="${g.X(x) - 8.5}" y="${g.Y(y) - 7.5}" width="17" height="15" rx="2" fill="#fff" fill-opacity=".9" stroke="${wave}" stroke-width="1.200"/><text x="${g.X(x)}" y="${g.Y(y) + 3}" text-anchor="middle" font-size="8" font-weight="400" fill="#222">(${s})</text>`); });
  g.text(25, 565, 'IT-Finance.com - Tiempo Real', 8, '#222', 'font-weight="400"');
  for (let i = 0; i <= 15; i++) if (i !== 3) g.mark(priceY(1 + i / 10), String((10 + i) / 10).replace('.', ','));
  g.tag(443, '1,31834', '#107010'); g.tag(450, '1,30475', '#a01010'); g.tag(457, '1,30418', '#966400');
}
function drawTrain(g) {
  g.rect(23, 575, 1379, 591, '#d9f5d7'); g.rect(23, 641, 1379, 656, '#ffdcdc');
  [575, 591, 641, 656].forEach(y => g.line([[23, y], [1379, y]], '#222', 1.2));
  g.line([[23, 616], [1379, 616]], '#1414aa', 1.5, '4 4');
  const lag = trainFast.map(([x, y]) => [x + 4, y + 1]);
  g.between(trainFast, lag, 27, 1379, '#f05050', '#50c850', .3);
  g.line(lag.filter(p => p[0] < 1380), '#333', 1, '4 2');
  const mean = []; for (let x = 460; x <= 1379; x += 4) { let s = 0; for (let d = 0; d <= 36; d += 3) s += at(trainSlow, x - d); mean.push([x, s / 13]); }
  g.between(trainSlow, mean, 460, 1379, '#5060e0', '#5060e0', 0);
  g.between(trainSlow, mean, 460, 1379, '#d040d0', '#5060e0', .32);
  g.area([...trainFast.filter(p => p[0] > 812 && p[0] < 850), [848, 591], [816, 591]], '#208a30', .45);
  g.area([...trainSlow.filter(p => p[0] > 1079 && p[0] < 1145), [1144, 641]], '#803028', .45);
  g.area([...trainSlow.filter(p => p[0] > 1150 && p[0] < 1230), [1226, 641], [1151, 641]], '#803028', .4);
  g.area([...trainSlow.filter(p => p[0] > 1260 && p[0] < 1300), [1300, 641]], '#803028', .4);
  g.line(mean, '#111', 3, '5 6');
  g.trend(trainSlow, '#0c0ca0', '#f81010', 3.5);
  g.trend(trainFast, '#000', '#e01818', 1.6);
  g.tri(trainUp, true, '#0808b4', 4); g.tri(trainDown, false, '#b00808', 4);
  g.tag(575, '100'); g.tag(587, '84,151'); g.tag(591, '80'); g.tag(599, '75,810', '#e02020'); g.mark(608, '60'); g.mark(624, '40'); g.tag(616, '50', '#1414aa');
  g.tag(629, '30,294', '#e02020'); g.tag(635, '27,069'); g.tag(643, '20'); g.tag(655, '0');
}
function drawWilly(g) {
  willyBands.split(' ').forEach(s => { const [a, b] = s.slice(1).split('-').map(Number); g.rect(a, 661, b, 716, bandColor[s[0]]); });
  g.line([[23, 666], [1379, 666]], '#222', 1.2, '4 4'); g.line([[23, 715], [1379, 715]], '#222', 1.2, '4 4');
  g.line([[23, 678], [1379, 678]], '#14148c', 1.5); g.line([[23, 690], [1379, 690]], '#1414aa', 1.5, '5 4'); g.line([[23, 702], [1379, 702]], '#d01010', 1.5);
  const col = { r: '#960000', b: '#0000c8', o: '#ff9a08', g: '#08c808' };
  const all = P(willyRuns.replace(/[rbog] /g, ''));
  g.area([[175, 702], ...all.map(([x, y]) => [x, Math.max(702, y)]), [1379, 702]], '#701010', .45);
  g.area([[175, 678], ...all.map(([x, y]) => [x, Math.min(678, y)]), [1379, 678]], '#209020', .4);
  let last = null;
  willyRuns.split(/(?=[rbog] )/).forEach(s => { const pts = P(s.slice(2)); g.line(last ? [last, ...pts] : pts, col[s[0]], 3, '', 'stroke-linejoin="round"'); last = pts[pts.length - 1]; });
  g.tri([249, 278, 330, 440, 513, 690, 1328, 1351].map(x => [x, 690]), true, '#0808b4');
  g.tri([263, 285, 395, 469, 521, 866, 1335].map(x => [x, 689]), false, '#b00808');
  g.tag(666, '0'); g.tag(678, '-25', '#1414aa'); g.tag(684, '-37,440', '#ff9a08'); g.tag(691, '-50', '#1414aa'); g.tag(702, '-75', '#d01010'); g.tag(711, '-100');
}
function drawAwe(g) {
  [722, 735, 759, 771].forEach(y => g.line([[23, y], [1567, y]], '#e6e6e6', 1, '1 3'));
  const bars = (pts, pick) => { for (let q = 0; q < 185; q++) { const x = quarterX(q); if (x < pts[0][0]) continue; const y = at(pts, x), falling = y > at(pts, x - 7.34); g.rect(x - 2.5, Math.min(748, y), x + 2.7, Math.max(748, y), pick(y < 748, falling)); } };
  bars(aweSlow, (pos, f) => f ? '#ffcfcf' : '#ccffcc');
  bars(aweFast, (pos, f) => pos ? (f ? '#ff10ee' : '#1010ff') : (f ? '#ff1818' : '#109696'));
  g.line([[23, 748], [1379, 748]], '#1818e8', 2);
  g.trend(aweFast, '#04043c', '#b400b4', 3); g.trend(aweSlow, '#66f866', '#ff9408', 3);
  g.tri(P('183,775 337,741 455,756 682,755 939,758 1070,752 1130,761 1291,754'), true, '#20f4ff', 4);
  g.tri(P('300,740 351,735 594,747 777,736 1064,751 1085,754 1277,754'), false, '#f8f410', 4);
  g.rect(1377, 743, 1382, 748, '#f010e0');
  g.mark(722, '0,4'); g.mark(734, '0,2'); g.tag(739, '0,0388', '#b400b4'); g.tag(746, '0,0284', '#66e866'); g.tag(752, '0', '#f010e0'); g.mark(760, '-0,2'); g.mark(771, '-0,4'); g.mark(779, '-0,6');
}
function drawFuerza(g) {
  g.rect(24, 784, 1383, 831, '#fffb86');
  fuerza.split(' ').forEach(s => { const [a, b] = s.split('-').map(Number); g.rect(a, 784, b, 831, '#42fc42'); });
  g.line([[23, 809], [1379, 809]], '#111', 1.2);
  g.mark(789, '0,505'); g.tag(809, '0,5000'); g.mark(827, '0,495');
}
function drawAll() {
  plot('price', 19, 567, drawPrice); plot('tren', 567, 661, drawTrain); plot('willy', 661, 717, drawWilly);
  plot('awe', 717, 784, drawAwe); plot('fuerza', 784, 831, drawFuerza);
  const el = document.getElementById('years'), W = el.clientWidth; let s = `<path d="M0 .5H${W - AXIS}" stroke="#7f96a1"/>`;
  for (let y = 1982; y <= 2032; y += 2) { const x = Math.round((quarterX((y - 1980) * 4) - 23) * (W - AXIS) / 1544); s += `<path d="M${x} 0v3" stroke="#7f96a1"/><text x="${x}" y="10" text-anchor="middle" font-size="8" font-weight="bold" fill="#111">${y}</text>`; }
  el.innerHTML = s;
}
drawAll();
addEventListener('resize', drawAll);
</script>
</body>
</html>
